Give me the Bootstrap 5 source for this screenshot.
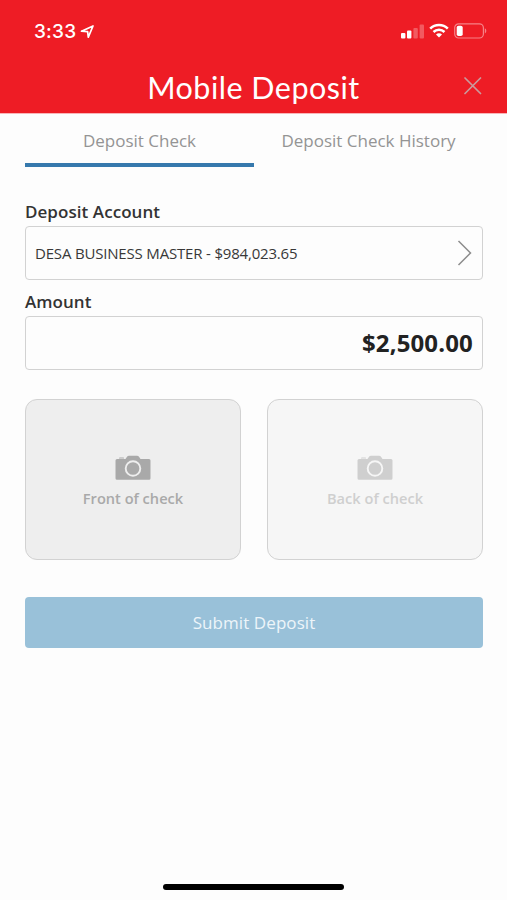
<!DOCTYPE html>
<html lang="en">
<head>
<meta charset="utf-8">
<meta name="viewport" content="width=device-width, initial-scale=1">
<title>Mobile Deposit</title>
<link rel="stylesheet" href="https://cdn.jsdelivr.net/npm/bootstrap@5.3.0/dist/css/bootstrap.min.css">
<style>
  body { font-family: "Open Sans", "Noto Sans", sans-serif; background: #fdfdfd; color: #333; line-height: 24px; }
  .app-header { height: 114px; background: #ee1c25; border-bottom: 1px solid #f9b5b8; color: #fff; }
  .status-bar { height: 62px; padding: 0 20px 0 34px; }
  .clock { font: 500 19px/24px Inter, sans-serif; letter-spacing: .2px; padding-top: 1px; }
  .app-title { font: 400 30.5px/36px Lato, sans-serif; letter-spacing: .5px; padding-top: 2px; }
  .title-bar { height: 48px; padding: 0 25px; }
  .side-slot { width: 18px; }
  .content { padding: 0 24px 0 25px; }
  .deposit-tabs { height: 53px; margin-bottom: 33px; }
  .deposit-tabs .nav-link { width: 50%; padding: 15px 0 0; color: #949494; font-size: 17px; border-bottom: 4px solid transparent; text-align: center; }
  .deposit-tabs .nav-link.active { color: #949494; border-bottom-color: #3679ad; }
  .field-label { font-size: 17px; font-weight: 600; line-height: 24px; margin-bottom: 2px; letter-spacing: .06px; }
  .field-box { height: 54px; border: 1px solid #d2d2d2; border-radius: 4px; background: #fdfdfd; padding: 0 9px; color: #383838; }
  .account-box { margin-bottom: 10px; }
  .account-name { font-size: 15px; letter-spacing: -.18px; }
  .amount-value { font-size: 24px; font-weight: 700; color: #222; letter-spacing: .15px; }
  .check-grid { gap: 26px; margin-top: 29px; }
  .check-tile { height: 161px; padding-top: 6px; border: 1px solid #d2d2d2; border-radius: 12px; background: #eee; color: #a9a9a9; font-size: 14.6px; font-weight: 600; }
  .check-tile.is-waiting { background: #f6f6f6; color: #cfcfcf; }
  .check-tile svg { margin-bottom: 5px; }
  .submit-btn { height: 51px; margin-top: 37px; border: 0; border-radius: 4px; background: #99c1d9; color: #edf5fa; font-size: 17px; letter-spacing: .08px; }
  .home-bar { width: 181px; height: 6px; border-radius: 3px; background: #000; margin-bottom: 10px; }
</style>
</head>
<body>
<div class="d-flex flex-column vh-100 overflow-hidden">
  <header class="app-header flex-shrink-0">
    <div class="status-bar d-flex align-items-center justify-content-between">
      <div class="d-flex align-items-center">
        <span class="clock">3:33</span>
        <svg class="ms-1" width="15" height="15" viewBox="0 0 15 15" fill="none" stroke="#fff" stroke-width="1.7" stroke-linejoin="round"><path d="M1.500 7.200 13 2 8.300 13.200 7.600 7.700Z"/></svg>
      </div>
      <div class="d-flex align-items-center">
        <svg width="24" height="16" viewBox="0 0 24 16" fill="#fff"><rect x="0" y="10" width="4.400" height="5.500" rx="1"/><rect x="6" y="7.500" width="4.400" height="8" rx="1"/><g opacity=".27"><rect x="12.400" y="5" width="4.400" height="10.500" rx="1"/><rect x="18.600" y="1.500" width="4.400" height="14" rx="1"/></g></svg>
        <svg class="ms-1" width="20" height="16" viewBox="0 0 20 16" fill="none" stroke="#fff" stroke-width="2.500"><path d="M1.200 5.600C6 .7 14 .7 18.800 5.600M4.500 9c3-3 8-3 11 0"/><path d="M7 11.400c1.700-1.500 4.300-1.500 6 0l-3 3.100Z" fill="#fff" stroke="none"/></svg>
        <svg class="ms-1" width="34" height="16" viewBox="0 0 34 16"><rect x="1.700" y=".8" width="28.700" height="14.200" rx="4" fill="none" stroke="#fff" stroke-opacity=".45" stroke-width="1.200"/><rect x="3.700" y="2.700" width="6" height="10.400" rx="1.800" fill="#fff"/><path d="M31.800 5.300c2 1 2 4.200 0 5.200Z" fill="#fff" opacity=".45"/></svg>
      </div>
    </div>
    <div class="title-bar d-flex align-items-center justify-content-between">
      <span class="side-slot"></span>
      <h1 class="app-title mb-0">Mobile Deposit</h1>
      <button class="side-slot btn p-0 border-0 d-flex" type="button" aria-label="Close">
        <svg width="18" height="18" viewBox="0 0 18 18" stroke="#c99a9d" stroke-width="1.700" stroke-linecap="round"><path d="M1 1l15.500 15.500M16.500 1 1 16.500"/></svg>
      </button>
    </div>
  </header>

  <main class="content flex-grow-1">
    <nav class="deposit-tabs nav flex-nowrap">
      <a class="nav-link active" href="#">Deposit Check</a>
      <a class="nav-link" href="#">Deposit Check History</a>
    </nav>

    <form class="d-flex flex-column">
      <div class="field-label">Deposit Account</div>
      <div class="field-box account-box d-flex align-items-center justify-content-between">
        <span class="account-name">DESA BUSINESS MASTER - $984,023.65</span>
        <svg width="16" height="26" viewBox="0 0 16 26" fill="none" stroke="#8d8d8d" stroke-width="1.500"><path d="M1.500 1 13.500 13 1.500 25"/></svg>
      </div>
      <div class="field-label">Amount</div>
      <div class="field-box d-flex align-items-center justify-content-end">
        <span class="amount-value">$2,500.00</span>
      </div>

      <div class="check-grid d-flex">
        <div class="check-tile d-flex flex-column flex-fill w-50 align-items-center justify-content-center">
          <svg width="36" height="26" viewBox="0 0 36 26" fill="currentColor"><path d="M4 3.200Q4 2 5.200 2H8q1 0 1 1v1H4Z" opacity=".5"/><path d="M2 4h8.500L12 1.700Q12.700 .8 14 .8h8q1.300 0 2 .9L25.500 4H34q1.500 0 1.500 1.500v17.700q0 1.500-1.500 1.500H2Q.5 24.700 .5 23.200V5.500Q.5 4 2 4Z"/><circle cx="18" cy="13.500" r="7.300" fill="none" stroke="#eee" stroke-width="1.900"/></svg>
          <span>Front of check</span>
        </div>
        <div class="check-tile is-waiting d-flex flex-column flex-fill w-50 align-items-center justify-content-center">
          <svg width="36" height="26" viewBox="0 0 36 26" fill="currentColor"><path d="M4 3.200Q4 2 5.200 2H8q1 0 1 1v1H4Z" opacity=".5"/><path d="M2 4h8.500L12 1.700Q12.700 .8 14 .8h8q1.300 0 2 .9L25.500 4H34q1.500 0 1.500 1.500v17.700q0 1.500-1.500 1.500H2Q.5 24.700 .5 23.200V5.500Q.5 4 2 4Z"/><circle cx="18" cy="13.500" r="7.300" fill="none" stroke="#f6f6f6" stroke-width="1.900"/></svg>
          <span>Back of check</span>
        </div>
      </div>

      <button class="submit-btn btn w-100" type="button">Submit Deposit</button>
    </form>
  </main>
  <div class="home-bar mx-auto flex-shrink-0"></div>
</div>
<script src="https://cdn.jsdelivr.net/npm/bootstrap@5.3.0/dist/js/bootstrap.bundle.min.js"></script>
</body>
</html>
